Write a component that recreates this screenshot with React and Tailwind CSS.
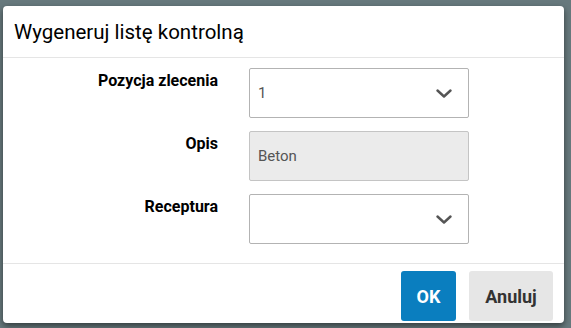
function Chevron() {
  return (
    <svg width="16" height="9" viewBox="0 0 16 9" className="shrink-0">
      <path d="M1.5 1.5 L8 7.5 L14.5 1.5" fill="none" stroke="#555" strokeWidth="2.4" strokeLinecap="round" strokeLinejoin="round" />
    </svg>
  );
}

function Row({ label, children }) {
  return (
    <div className="flex items-start">
      <div className="w-[215px] pt-[3px] text-right text-[16px] font-bold leading-5 text-black">{label}</div>
      <div className="ml-[31px] w-[220px]">{children}</div>
    </div>
  );
}

export default function App() {
  return (
    <div className="w-[571px] h-[328px] bg-[#67797d] pt-[6px] pl-[3px] font-['Roboto',_'Liberation_Sans',_sans-serif]">
      <div className="w-[561px] h-[317px] bg-white rounded-[4px] shadow-[0_3px_6px_rgba(0,0,0,0.5)] flex flex-col">
        <div className="h-[52px] border-b border-[#e5e5e5] flex items-center px-[11px]">
          <h2 className="text-[20.5px] text-black leading-none pt-[2px]">Wygeneruj listę kontrolną</h2>
        </div>
        <div className="flex flex-col gap-[13px] pt-[10px] pb-[19px] border-b border-[#e5e5e5]">
          <Row label="Pozycja zlecenia">
            <div className="h-[50px] border border-[#b3b3b3] rounded-[2px] flex items-center justify-between pl-[8px] pr-[16px]">
              <span className="text-[15px] text-[#555]">1</span>
              <Chevron />
            </div>
          </Row>
          <Row label="Opis">
            <div className="h-[50px] border border-[#c4c4c4] rounded-[2px] bg-[#ebebeb] flex items-center pl-[8px]">
              <span className="text-[15px] text-[#555]">Beton</span>
            </div>
          </Row>
          <Row label="Receptura">
            <div className="h-[50px] border border-[#b3b3b3] rounded-[2px] flex items-center justify-end pr-[16px]">
              <Chevron />
            </div>
          </Row>
        </div>
        <div className="flex justify-end gap-[13px] pt-[7px] pr-[11px]">
          <button className="w-[55px] h-[50px] rounded-[3px] bg-[#0a7ebf] text-white text-[18px] font-bold">OK</button>
          <button className="w-[84px] h-[50px] rounded-[3px] bg-[#e6e6e6] text-[#333] text-[18px] font-bold">Anuluj</button>
        </div>
      </div>
    </div>
  );
}
